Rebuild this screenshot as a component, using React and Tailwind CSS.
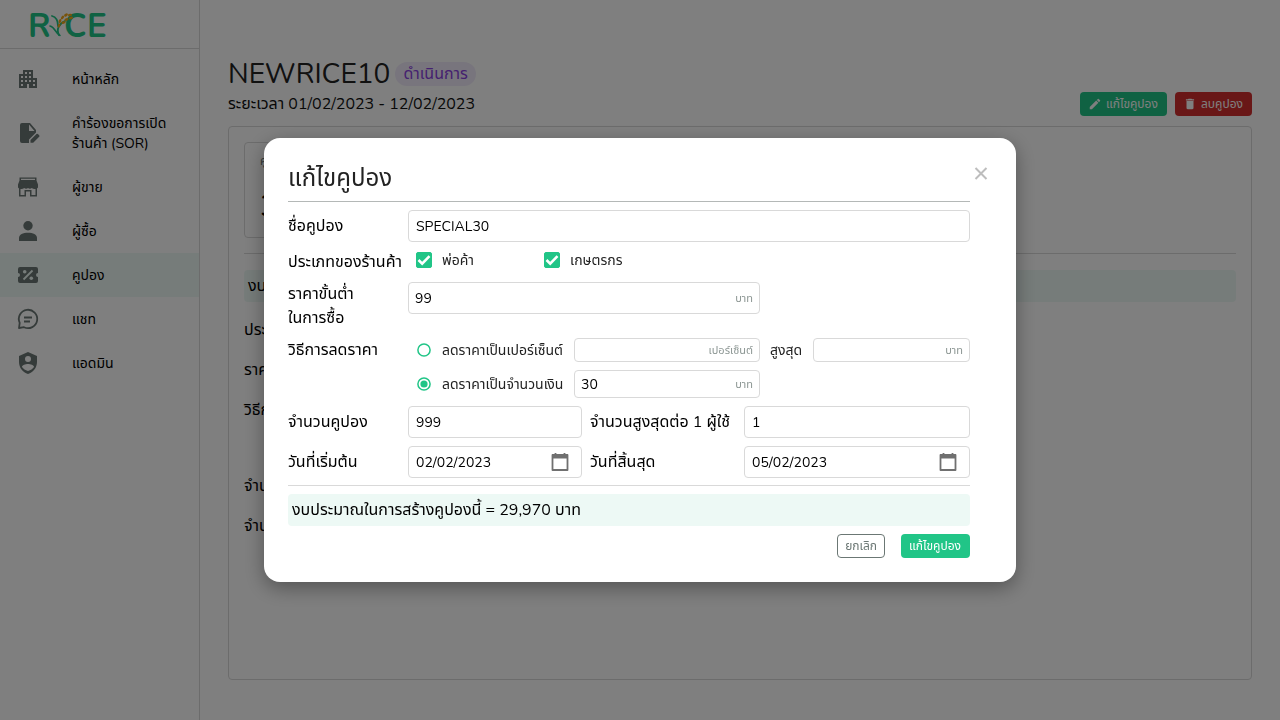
import { useState } from 'react';
import { MdApartment, MdEdit, MdDelete } from 'react-icons/md';

const NAV = [
  { label: 'หน้าหลัก', icon: 'home' },
  { label: 'คำร้องขอการเปิดร้านค้า (SOR)', icon: 'request' },
  { label: 'ผู้ขาย', icon: 'seller' },
  { label: 'ผู้ซื้อ', icon: 'buyer' },
  { label: 'คูปอง', icon: 'coupon', active: true },
  { label: 'แชท', icon: 'chat' },
  { label: 'แอดมิน', icon: 'admin' },
];

function NavIcon({ name }) {
  if (name === 'home') return <MdApartment className="size-6" />;
  if (name === 'buyer') {
    return (
      <svg viewBox="0 0 24 24" className="size-6" fill="currentColor">
        <circle cx="12" cy="6.7" r="4.700" />
        <path d="M3 22v-3c0-3.500 4-5.300 9-5.300s9 1.800 9 5.300v3z" />
      </svg>
    );
  }
  if (name === 'request') {
    return (
      <svg viewBox="0 0 24 24" className="size-6" fill="currentColor">
        <path d="M6 2a2 2 0 0 0-2 2v16a2 2 0 0 0 2 2h7v-3.500l7-7V9l-6-7H6Zm7 1.500L18.500 10H13V3.500Z" />
        <path d="m14.500 19 6-6a1 1 0 0 1 1.400 0l1.300 1.300a1 1 0 0 1 0 1.400l-6 6h-2.700z" />
      </svg>
    );
  }
  if (name === 'seller') {
    return (
      <svg viewBox="0 0 24 24" className="size-6" fill="currentColor">
        <path fillRule="evenodd" d="M3.500 2.500h17v3l1.500 4v3l-1 1v8h-7v-5h-4v5H3v-8l-1-1v-3l1.500-4v-3ZM5 3.800V5h14V3.800H5ZM4.500 14v6h4v-5h7v5h4v-6c-1.500.3-2.500 0-3.700-.9-1 .9-2.700.9-3.800 0-1.100.9-2.800.9-3.800 0-1.200.9-2.200 1.200-3.700.9Z" />
      </svg>
    );
  }
  if (name === 'coupon') {
    return (
      <svg viewBox="0 0 24 24" className="size-6">
        <path fill="currentColor" d="M4 4h16a2 2 0 0 1 2 2v4a2 2 0 0 0 0 4v4a2 2 0 0 1-2 2H4a2 2 0 0 1-2-2v-4a2 2 0 0 0 0-4V6a2 2 0 0 1 2-2Z" />
        <path d="m7.500 16.500 9-9" stroke="#edf9f5" strokeWidth="1.800" />
        <circle cx="8.700" cy="8.700" r="1.800" fill="#edf9f5" />
        <circle cx="15.300" cy="15.300" r="1.800" fill="#edf9f5" />
      </svg>
    );
  }
  if (name === 'chat') {
    return (
      <svg viewBox="0 0 24 24" className="size-6" fill="none" stroke="currentColor" strokeWidth="1.800">
        <path d="M3 21l.7-5.200A9.200 9.200 0 1 1 8 20.200z" strokeLinejoin="round" />
        <path d="M8 10.500h8M8 14.500h6" />
      </svg>
    );
  }
  return (
    <svg viewBox="0 0 24 24" className="size-6" fill="currentColor">
      <path fillRule="evenodd" d="M12 1l9 4v6c0 5.550-3.840 10.740-9 12-5.160-1.260-9-6.450-9-12V5l9-4Zm0 4a3 3 0 1 0 0 6 3 3 0 0 0 0-6Zm0 8c-2.500 0-6 1-6 3 1.300 2 3.400 3.300 6 4 2.600-.7 4.700-2 6-4 0-2-3.500-3-6-3Z" />
    </svg>
  );
}

const GRAINS = [
  [31, 23.500, -70], [32, 19, -70], [34.500, 15.500, -50], [38, 13, -30], [42, 13, -10],
  [35.500, 20.500, -15], [38.500, 17.500, -15], [43, 16, -15],
];

function Logo() {
  return (
    <svg viewBox="0 0 84 44" className="h-11 w-21" role="img" aria-label="RYCE">
      <g fill="#21c587" fontSize="33" fontFamily="Nunito, sans-serif" fontWeight="700">
        <text x="0" y="34.500">R</text>
        <text x="36" y="34.500">C</text>
        <text x="59" y="34.500">E</text>
      </g>
      <g fill="none" stroke="#21c587" strokeLinecap="round">
        <path d="M24 14c4 1 6 4 6 10M37 19c-6 3-9 8-6 14" strokeWidth="1.800" />
        <path d="M22 24c5 1 5 7 10 9.500" strokeWidth="1.600" />
      </g>
      <g fill="#f0a818">
        {GRAINS.map(([x, y, turn]) => (
          <ellipse key={`${x}-${y}`} cx={x} cy={y} rx="2.100" ry="1.300" transform={`rotate(${turn} ${x} ${y})`} />
        ))}
      </g>
    </svg>
  );
}

const box = 'flex min-w-0 items-center rounded border border-[#d9d9d9] bg-white';
const field = 'w-0 min-w-0 flex-1 bg-transparent pt-0.5 text-sm text-black outline-none';
const label = 'text-base leading-6 whitespace-nowrap text-black';

function UnitInput({ id, value, unit, className, ...rest }) {
  return (
    <div className={`${box} px-1.5 ${className}`}>
      <input id={id} defaultValue={value} className={field} {...rest} />
      <span className="pt-0.5 text-[11px] leading-4 text-[#8d9794]">{unit}</span>
    </div>
  );
}

function Tick({ children }) {
  return (
    <label className="flex w-32 items-center gap-2.5 text-sm leading-5 text-[#222]">
      <span className="grid size-4 place-items-center">
        <input type="checkbox" defaultChecked className="peer col-start-1 row-start-1 size-4 appearance-none rounded-xs border border-[#21c587] checked:bg-[#21c587]" />
        <svg viewBox="0 0 16 16" className="pointer-events-none col-start-1 row-start-1 hidden size-4 peer-checked:block" fill="none" stroke="white" strokeWidth="2.600">
          <path d="m2.500 8 3.700 3.700 7.300-7.500" />
        </svg>
      </span>
      <span className="pt-0.5">{children}</span>
    </label>
  );
}

function Radio({ children, ...props }) {
  return (
    <label className="flex w-[158px] shrink-0 items-center gap-2.5 pl-2 text-sm leading-5 whitespace-nowrap text-[#222]">
      <span className="grid size-4 place-items-center text-[#21c587]">
        <input type="radio" name="discount" className="peer col-start-1 row-start-1 size-4 appearance-none rounded-full" {...props} />
        <svg viewBox="0 0 16 16" className="pointer-events-none col-start-1 row-start-1 size-4 [&>circle:last-child]:opacity-0 peer-checked:[&>circle:last-child]:opacity-100">
          <circle cx="8" cy="8" r="6.100" fill="none" stroke="currentColor" strokeWidth="1.500" />
          <circle cx="8" cy="8" r="3.600" fill="currentColor" />
        </svg>
      </span>
      <span className="pt-0.5">{children}</span>
    </label>
  );
}

function DateInput({ id, value }) {
  return (
    <div className={`${box} h-8 pr-[11px] pl-[7px]`}>
      <input id={id} defaultValue={value} className={field} />
      <button type="button" aria-label="เลือกวันที่" className="text-[#707070]">
        <svg viewBox="0 0 20 20" className="size-5" fill="none" stroke="currentColor">
          <path d="M2.500 3h15v15h-15z" strokeWidth="1.800" strokeLinejoin="round" />
          <path d="M2 4.500h16" strokeWidth="4" />
          <path d="M5.500 1v3M14.500 1v3" strokeWidth="1.800" />
        </svg>
      </button>
    </div>
  );
}

function CouponDialog({ onClose }) {
  const [mode, setMode] = useState('amount');
  return (
    <div className="fixed inset-0 z-10 flex items-center justify-center bg-black/50">
      <div role="dialog" aria-modal="true" aria-labelledby="dialog-title" className="flex w-full max-w-[752px] items-start rounded-2xl bg-white p-6 shadow-[0_6px_20px_rgba(0,0,0,0.35)]">
        <form className="flex min-w-0 flex-1 flex-col gap-2" onSubmit={(e) => e.preventDefault()}>
          <h2 id="dialog-title" className="flex h-10 items-center border-b border-[#b4b8b7] pb-2 text-2xl text-[#222]">แก้ไขคูปอง</h2>
          <div className="grid grid-cols-[112px_174fr_146px_226fr] gap-2 border-b border-[#d9d9d9] pb-[7px]">
            <label htmlFor="name" className={`${label} self-center`}>ชื่อคูปอง</label>
            <div className={`${box} col-span-3 h-8 px-[7px]`}>
              <input id="name" defaultValue="SPECIAL30" className={field} />
            </div>

            <span className={label}>ประเภทของร้านค้า</span>
            <div className="col-span-3 flex h-5 pl-2">
              <Tick>พ่อค้า</Tick>
              <Tick>เกษตรกร</Tick>
            </div>

            <label htmlFor="minimum" className={label}>ราคาขั้นต่ำ<br />ในการซื้อ</label>
            <div className="col-span-3">
              <UnitInput id="minimum" value="99" unit="บาท" className="h-8 w-[352px]" />
            </div>

            <span className={label}>วิธีการลดราคา</span>
            <div className="col-span-3 flex min-w-0 flex-col gap-2">
              <div className="flex items-center gap-2">
                <Radio checked={mode === 'percent'} onChange={() => setMode('percent')}>ลดราคาเป็นเปอร์เซ็นต์</Radio>
                <UnitInput aria-label="เปอร์เซ็นต์" unit="เปอร์เซ็นต์" className="h-6 w-[186px]" />
                <label htmlFor="cap" className="w-[37px] pt-0.5 pl-0.5 text-sm leading-5 whitespace-nowrap text-[#222]">สูงสุด</label>
                <UnitInput id="cap" unit="บาท" className="h-6 flex-1" />
              </div>
              <div className="flex items-center gap-2">
                <Radio checked={mode === 'amount'} onChange={() => setMode('amount')}>ลดราคาเป็นจำนวนเงิน</Radio>
                <UnitInput aria-label="จำนวนเงิน" value="30" unit="บาท" className="h-7 w-[186px]" />
              </div>
            </div>

            <label htmlFor="count" className={`${label} self-center`}>จำนวนคูปอง</label>
            <div className={`${box} h-8 px-[7px]`}>
              <input id="count" defaultValue="999" className={field} />
            </div>
            <label htmlFor="per-user" className={`${label} self-center`}>จำนวนสูงสุดต่อ 1 ผู้ใช้</label>
            <div className={`${box} h-8 px-[7px]`}>
              <input id="per-user" defaultValue="1" className={field} />
            </div>

            <label htmlFor="start" className={`${label} self-center`}>วันที่เริ่มต้น</label>
            <DateInput id="start" value="02/02/2023" />
            <label htmlFor="end" className={`${label} self-center`}>วันที่สิ้นสุด</label>
            <DateInput id="end" value="05/02/2023" />
          </div>
          <p className="rounded bg-[#edf9f5] px-1 py-1 text-base leading-6 text-black">งบประมาณในการสร้างคูปองนี้ = 29,970 บาท</p>
          <div className="flex justify-end gap-4">
            <button type="button" onClick={onClose} className="h-6 rounded border border-[#6b7774] px-[7px] text-xs text-[#6b7774]">ยกเลิก</button>
            <button type="submit" className="h-6 rounded bg-[#21c587] pr-[9px] pl-2 text-xs text-white">แก้ไขคูปอง</button>
          </div>
        </form>
        <button type="button" aria-label="ปิด" onClick={onClose} className="pt-[5px] pl-1 text-[#bdbdbd]">
          <svg viewBox="0 0 18 18" className="size-[18px]" stroke="currentColor" strokeWidth="2">
            <path d="M1.500 1 12.500 12M12.500 1 1.500 12" />
          </svg>
        </button>
      </div>
    </div>
  );
}

export default function App() {
  const [open, setOpen] = useState(true);
  return (
    <div className="flex min-h-screen bg-white font-['Nunito','Noto_Sans_Thai','Noto_Sans',sans-serif] text-black">
      <aside className="w-[200px] shrink-0 border-r border-[#d9d9d9]">
        <a href="#home" className="flex h-[49px] items-center border-b border-[#d9d9d9] pl-7">
          <Logo />
        </a>
        <nav className="pt-2">
          {NAV.map((item) => (
            <a key={item.label} href={`#${item.icon}`} className={`flex items-center gap-8 pt-[13px] pr-6 pb-[11px] pl-4 text-sm leading-5 ${item.active ? 'bg-[#edf9f5]' : ''}`}>
              <span className="-mt-[5px] -mb-[3px] shrink-0 text-[#6b7774]"><NavIcon name={item.icon} /></span>
              {item.label}
            </a>
          ))}
        </nav>
      </aside>
      <main className="flex min-w-0 flex-1 flex-col px-7 pt-14 pb-10">
        <header className="flex items-end justify-between pb-2.5">
          <div>
            <div className="flex items-center gap-[5px]">
              <h1 className="text-[28px] leading-9 text-[#222]">NEWRICE10</h1>
              <span className="rounded-xl bg-[#f1ebfa] px-2 text-base leading-6 text-[#8a42e0]">ดำเนินการ</span>
            </div>
            <p className="text-base leading-6 text-[#111]">ระยะเวลา 01/02/2023 - 12/02/2023</p>
          </div>
          <div className="flex gap-2">
            <button type="button" onClick={() => setOpen(true)} className="flex h-6 items-center gap-1 rounded bg-[#21c587] pr-[9px] pl-2 text-xs text-white">
              <MdEdit className="size-3.5" />แก้ไขคูปอง
            </button>
            <button type="button" className="flex h-6 items-center gap-1 rounded bg-[#d32f2f] pr-[9px] pl-2 text-xs text-white">
              <MdDelete className="size-3.5" />ลบคูปอง
            </button>
          </div>
        </header>
        <section className="flex-1 rounded border border-[#d9d9d9] p-[15px]">
          <div className="h-24 w-60 rounded border border-[#d9d9d9] px-[15px] pt-2.5">
            <p className="text-xs leading-4 text-[#6b7774]">คูปองที่ใช้</p>
            <p className="text-[32px] leading-[76px]">3</p>
          </div>
          <hr className="mt-[15px] border-[#d9d9d9]" />
          <p className="mt-4 rounded bg-[#edf9f5] px-1 py-1 text-base leading-6">งบประมาณ</p>
          <div className="flex flex-col gap-4 pt-4 text-base leading-6">
            <p>ประเภทของร้านค้า</p>
            <p>ราคาขั้นต่ำ</p>
            <p className="pb-9">วิธีการลดราคา</p>
            <p>จำนวนคูปอง</p>
            <p>จำนวนสูงสุด</p>
          </div>
        </section>
      </main>
      {open && <CouponDialog onClose={() => setOpen(false)} />}
    </div>
  );
}
